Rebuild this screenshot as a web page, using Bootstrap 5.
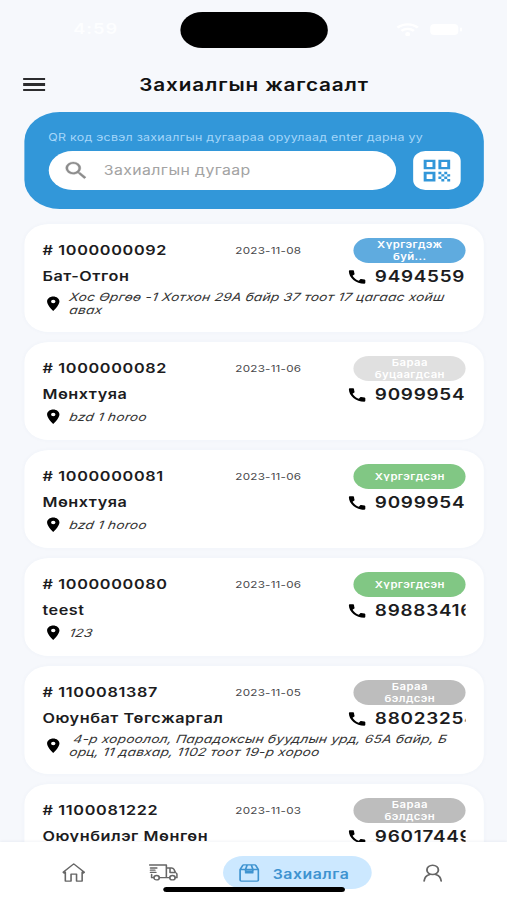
<!DOCTYPE html>
<html lang="mn">
<head>
<meta charset="utf-8">
<meta name="viewport" content="width=device-width, initial-scale=1">
<title>Захиалгын жагсаалт</title>
<link href="https://cdn.jsdelivr.net/npm/bootstrap@5.3.0/dist/css/bootstrap.min.css" rel="stylesheet">
<style>
  html, body { width: 507px; height: 900px; overflow: hidden; background: #f6f8fc; }
  /* The phone screen is laid out 416px wide and stretched to the window */
  .phone { width: 416px; height: 900px; transform: scaleX(1.21875); transform-origin: 0 0; background: #f6f8fc;
    font-family: Inter, "Noto Sans", sans-serif; color: #1c1c1e; overflow: hidden; }
  .phone svg { display: block; flex: none; }
  .statusbar { height: 58px; padding: 12px 36px 0 60px; color: #fdfeff; }
  .clock { width: 87.5px; font-size: 15px; font-weight: 600; line-height: 34px; letter-spacing: .8px; }
  .island { width: 121.5px; height: 35.5px; border-radius: 18px; background: #000; }
  .titlebar { height: 54px; padding: 0 19px; }
  .burger { width: 17.6px; height: 12.5px; border-top: 2.5px solid #2c2c2e; border-bottom: 2.5px solid #2c2c2e; margin-top: -1px; }
  .burger i { height: 2.5px; background: #2c2c2e; width: 100%; }
  .heading { font-size: 17px; font-weight: 600; letter-spacing: .7px; margin-right: 17.6px; color: #111; padding-left: 1px; }
  .lookup { margin: 0 19.5px 0 20px; height: 97px; border-radius: 29px; background: #3297d9; padding: 17px 18.8px 0 19.5px; }
  .hint { font-size: 10.2px; line-height: 17px; letter-spacing: .225px; color: #a5d6f9; margin-bottom: 5px; white-space: nowrap; }
  .field { width: 285px; height: 39px; border-radius: 20px; background: #fff; padding-left: 11.2px; }
  .field span { font-size: 13px; letter-spacing: .32px; color: #a3a3a3; margin-left: 11.5px; }
  .qr { width: 39px; height: 39px; border-radius: 10px; background: #fff; }
  .orders { padding: 15px 19.5px 0 20px; gap: 10px; }
  .order { height: 98px; border-radius: 20px; background: #fff; padding: 14px 14.3px 0 14.8px; box-shadow: 0 0 4px rgba(60,80,130,.035); flex: none; }
  .order.tall { height: 108px; }
  .toprow { height: 25px; }
  .oid { width: 158.5px; font-size: 13.3px; font-weight: 600; letter-spacing: .55px; white-space: nowrap; }
  .date { font-size: 9.6px; letter-spacing: .17px; color: #48484a; width: 97.3px; padding-top: 2px; white-space: nowrap; }
  .state { width: 92px; height: 24.5px; border-radius: 13px; font-size: 9.3px; line-height: 11.6px; font-weight: 600; letter-spacing: .32px; color: #fff; text-align: center; overflow: hidden; padding-top: 1px; }
  .moving { background: #5fabdf; } .returned { background: #e0e0e0; } .done { background: #81c784; } .packed { background: #bdbdbd; }
  .midrow { height: 27px; }
  .who { width: 249.8px; font-size: 13.3px; font-weight: 600; letter-spacing: .45px; white-space: nowrap; }
  .tel { width: 74.7px; margin-left: 5.2px; font-size: 15.5px; font-weight: 600; letter-spacing: .6px; overflow: hidden; white-space: nowrap; line-height: 22px; }
  .addr { font-size: 11.3px; font-style: italic; line-height: 13px; letter-spacing: .155px; color: #333; margin-left: 4.8px; white-space: nowrap; }
  .addr div { transform: skewX(-9deg); }
  .place { height: 18px; }
  .tall .place { height: 28px; }
  .tabs { left: 0; bottom: 0; width: 416px; height: 58px; background: #fff; padding: 3px 36.5px 0 36px; box-shadow: 0 -1px 2px rgba(60,80,130,.06); }
  .tab { width: 48px; }
  .tab.truck { width: 46px; }
  .active-tab { width: 121.5px; height: 33px; border-radius: 17px; background: #cce8ff; color: #3e93d0; font-size: 13px; font-weight: 600; letter-spacing: .42px; padding-left: 13px; gap: 10.5px; }
  .homebar { left: 134px; bottom: 8px; width: 148.5px; height: 5px; border-radius: 3px; background: #000; }
</style>
<script src="https://cdn.jsdelivr.net/npm/bootstrap@5.3.0/dist/js/bootstrap.bundle.min.js"></script>
</head>
<body>
<svg width="0" height="0" class="position-absolute">
  <symbol id="pin" viewBox="0 0 24 24"><path d="M12 2C8.130 2 5 5.130 5 9c0 5.250 7 13 7 13s7-7.750 7-13c0-3.870-3.130-7-7-7zm0 9.500a2.500 2.500 0 0 1 0-5 2.500 2.500 0 0 1 0 5z"/></symbol>
  <symbol id="call" viewBox="0 0 24 24"><path d="M20.010 15.380c-1.230 0-2.420-.2-3.530-.56-.35-.12-.74-.03-1.010.24l-1.570 1.970c-2.830-1.350-5.480-3.900-6.890-6.830l1.950-1.660c.27-.28.35-.67.24-1.020-.37-1.110-.56-2.300-.56-3.530 0-.54-.45-.99-.99-.99H4.190C3.650 3 3 3.240 3 3.990 3 13.280 10.730 21 20.010 21c.71 0 .99-.63.99-1.180v-3.450c0-.54-.45-.99-.99-.99z"/></symbol>
</svg>
<main class="phone position-relative">
  <div class="statusbar d-flex">
    <div class="clock">4:59</div>
    <div class="island"></div>
    <div class="ms-auto d-flex align-items-center" style="height:34px">
      <svg width="19" height="13" viewBox="0 0 20 14" fill="none" stroke="#fff" stroke-width="2.400"><path d="M1 5a13 13 0 0 1 18 0M4.500 8.500a8 8 0 0 1 11 0"/><circle cx="10" cy="12" r="1" fill="#fff"/></svg>
      <svg class="ms-2" width="28" height="13" viewBox="0 0 28 13"><rect x="1" y="1" width="23" height="11" rx="3.500" fill="#fff"/><rect x="25.500" y="4.500" width="1.500" height="4" rx=".7" fill="#fff"/></svg>
    </div>
  </div>
  <header class="titlebar d-flex align-items-center">
    <div class="burger d-flex align-items-center"><i></i></div>
    <h1 class="heading flex-grow-1 text-center mb-0">Захиалгын жагсаалт</h1>
  </header>
  <section class="lookup">
    <div class="hint">QR код эсвэл захиалгын дугаараа оруулаад enter дарна уу</div>
    <div class="d-flex justify-content-between">
      <div class="field d-flex align-items-center">
        <svg width="23" height="23" viewBox="0 0 24 24" fill="#8c8c8c" stroke="#8c8c8c" stroke-width=".3"><path d="M15.500 14h-.79l-.28-.27A6.471 6.471 0 0 0 16 9.500 6.500 6.500 0 1 0 9.500 16c1.610 0 3.090-.59 4.230-1.570l.27.28v.79l5 4.990L20.490 19l-4.990-5zm-6 0C7.010 14 5 11.990 5 9.500S7.010 5 9.500 5 14 7.010 14 9.500 11.990 14 9.500 14z"/></svg>
        <span>Захиалгын дугаар</span>
      </div>
      <div class="qr d-flex align-items-center justify-content-center">
        <svg width="29" height="29" viewBox="0 0 24 24" fill="#3297d9"><path fill-rule="evenodd" d="M3 11h8V3H3v8zm2-6h4v4H5V5zM3 21h8v-8H3v8zm2-6h4v4H5v-4zM13 3v8h8V3h-8zm6 6h-4V5h4v4z"/><path d="M19 19h2v2h-2zM13 13h2v2h-2zM15 15h2v2h-2zM13 17h2v2h-2zM15 19h2v2h-2zM17 17h2v2h-2zM17 13h2v2h-2zM19 15h2v2h-2z"/></svg>
      </div>
    </div>
  </section>
  <section class="orders d-flex flex-column">
    <article class="order tall">
      <div class="toprow d-flex align-items-center"><div class="oid"># 1000000092</div><div class="date">2023-11-08</div><div class="state moving">Хүргэгдэж<br>буй...</div></div>
      <div class="midrow d-flex align-items-center"><div class="who">Бат-Отгон</div><svg width="18" height="18"><use href="#call"/></svg><div class="tel">94945594</div></div>
      <div class="place d-flex align-items-center"><svg width="17.400" height="17.400"><use href="#pin"/></svg><div class="addr"><div>Хос Өргөө -1 Хотхон 29А байр 37 тоот 17 цагаас хойш</div><div>авах</div></div></div>
    </article>
    <article class="order">
      <div class="toprow d-flex align-items-center"><div class="oid"># 1000000082</div><div class="date">2023-11-06</div><div class="state returned">Бараа<br>буцаагдсан</div></div>
      <div class="midrow d-flex align-items-center"><div class="who">Мөнхтуяа</div><svg width="18" height="18"><use href="#call"/></svg><div class="tel">90999543</div></div>
      <div class="place d-flex align-items-center"><svg width="17.400" height="17.400"><use href="#pin"/></svg><div class="addr"><div>bzd 1 horoo</div></div></div>
    </article>
    <article class="order">
      <div class="toprow d-flex align-items-center"><div class="oid"># 1000000081</div><div class="date">2023-11-06</div><div class="state done d-flex align-items-center justify-content-center">Хүргэгдсэн</div></div>
      <div class="midrow d-flex align-items-center"><div class="who">Мөнхтуяа</div><svg width="18" height="18"><use href="#call"/></svg><div class="tel">90999543</div></div>
      <div class="place d-flex align-items-center"><svg width="17.400" height="17.400"><use href="#pin"/></svg><div class="addr"><div>bzd 1 horoo</div></div></div>
    </article>
    <article class="order">
      <div class="toprow d-flex align-items-center"><div class="oid"># 1000000080</div><div class="date">2023-11-06</div><div class="state done d-flex align-items-center justify-content-center">Хүргэгдсэн</div></div>
      <div class="midrow d-flex align-items-center"><div class="who">teest</div><svg width="18" height="18"><use href="#call"/></svg><div class="tel">89883416</div></div>
      <div class="place d-flex align-items-center"><svg width="17.400" height="17.400"><use href="#pin"/></svg><div class="addr"><div>123</div></div></div>
    </article>
    <article class="order tall">
      <div class="toprow d-flex align-items-center"><div class="oid"># 1100081387</div><div class="date">2023-11-05</div><div class="state packed">Бараа<br>бэлдсэн</div></div>
      <div class="midrow d-flex align-items-center"><div class="who">Оюунбат Төгсжаргал</div><svg width="18" height="18"><use href="#call"/></svg><div class="tel">88023254</div></div>
      <div class="place d-flex align-items-center"><svg width="17.400" height="17.400"><use href="#pin"/></svg><div class="addr"><div>&nbsp;4-р хороолол, Парадоксын буудлын урд, 65А байр, Б</div><div>орц, 11 давхар, 1102 тоот 19-р хороо</div></div></div>
    </article>
    <article class="order">
      <div class="toprow d-flex align-items-center"><div class="oid"># 1100081222</div><div class="date">2023-11-03</div><div class="state packed">Бараа<br>бэлдсэн</div></div>
      <div class="midrow d-flex align-items-center"><div class="who">Оюунбилэг Мөнгөн</div><svg width="18" height="18"><use href="#call"/></svg><div class="tel">96017449</div></div>
    </article>
  </section>
  <nav class="tabs position-absolute d-flex align-items-center justify-content-between">
    <div class="tab d-flex justify-content-center"><svg width="19" height="19" viewBox="0 0 19 19" fill="none" stroke="#666" stroke-width="1.300" stroke-linejoin="round"><path d="M.8 9.200 9.500.9l8.700 8.300-.8.8-1-.8v8.900h-4.600v-7H7.300v7H2.600V9.200l-1 .8z"/></svg></div>
    <div class="tab truck d-flex justify-content-center"><svg width="24" height="17" viewBox="0 0 24 17" fill="none" stroke="#666" stroke-width="1.300" stroke-linejoin="round" stroke-linecap="round"><path d="M.8 1h13.700v12.700H8.800M4.200 13.700H2.400v-3.200M14.500 4h4.300c1 0 1.500.5 1.900 1.300l1.300 3.200c.8.4 1.200.9 1.200 1.800v3.400h-1.300M14.500 13.700h2.700M17.500 4v4.500H22M1.500 4h5.200M1.500 6.200h3.600M1.500 8.400h4.400"/><circle cx="6.500" cy="13.700" r="2.200"/><circle cx="19.500" cy="13.700" r="2.200"/></svg></div>
    <div class="active-tab d-flex align-items-center"><svg width="17" height="18" viewBox="0 0 17 18" fill="none" stroke="#3e93d0" stroke-width="1.400" stroke-linejoin="round" stroke-linecap="round"><path d="M1 5.500v10.600c0 .6.400 1 1 1h13c.6 0 1-.4 1-1V5.500zM1 5.500 3.200 1.400c.1-.3.400-.5.700-.5h9.200c.3 0 .6.200.7.500L16 5.500M6.800 1 5.500 5.300v1.900h6V5.300L10.200 1M5.500 8.700h6"/></svg><span class="pt-1">Захиалга</span></div>
    <div class="tab d-flex justify-content-center"><svg width="16" height="18" viewBox="0 0 16 18" fill="none" stroke="#666" stroke-width="1.500" stroke-linecap="round"><circle cx="8" cy="5.900" r="4.700"/><path d="M1 17c.3-3.600 2.300-5.700 4.600-6.500M15 17c-.3-3.600-2.300-5.700-4.600-6.500"/></svg></div>
  </nav>
  <div class="homebar position-absolute"></div>
</main>
</body>
</html>
